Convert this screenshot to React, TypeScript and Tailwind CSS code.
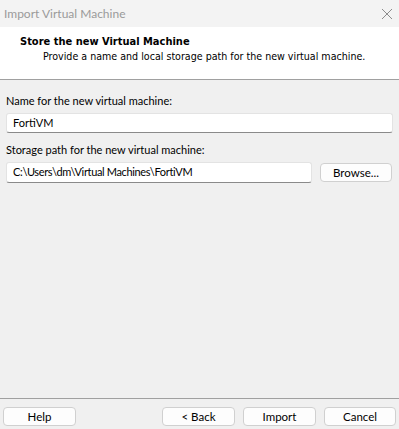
import React from 'react';

const uiFont = { fontFamily: 'Lato, "Liberation Sans", sans-serif' };

function WinButton({ label, className = '' }: { label: string; className?: string }) {
  return (
    <button
      className={`h-[19px] rounded-[4px] border border-[#d0d0d0] bg-[#fdfdfd] text-[11.5px] leading-none text-black ${className}`}
    >
      {label}
    </button>
  );
}

export default function App() {
  return (
    <div
      className="flex h-[429px] w-[399px] flex-col overflow-hidden bg-[#f0f0f0] text-black"
      style={uiFont}
    >
      {/* window title bar */}
      <div className="flex h-[27px] items-center justify-between bg-[#f3f3f3] pl-[4px] pr-[5px]">
        <span className="text-[12px] text-[#9a9a9a]">Import Virtual Machine</span>
        <svg width="12" height="12" viewBox="0 0 12 12" className="mr-[1px]">
          <path d="M1 1L11 11M11 1L1 11" stroke="#8c8c8c" strokeWidth="1" />
        </svg>
      </div>

      {/* wizard header */}
      <div
        className="flex h-[53px] flex-col border-b border-[#a0a0a0] bg-white pt-[8px]"
        style={{ fontFamily: '"DejaVu Sans Condensed", "Liberation Sans", sans-serif' }}
      >
        <div className="pl-[20px] text-[11px] font-bold leading-[14px]">Store the new Virtual Machine</div>
        <div className="pl-[43px] text-[10.6px] leading-[15px]">
          Provide a name and local storage path for the new virtual machine.
        </div>
      </div>

      {/* form */}
      <div className="flex flex-1 flex-col px-[6px] pt-[13px]">
        <label className="text-[11px] leading-[16px]">Name for the new virtual machine:</label>
        <div className="mt-[4px] flex h-[20px] items-center rounded-[3px] border border-[#e3e3e3] border-b-[#8a8a8a] bg-white pl-[6px] text-[11px]">
          FortiVM
        </div>
        <label className="mt-[9px] text-[11px] leading-[16px]">Storage path for the new virtual machine:</label>
        <div className="mt-[4px] flex items-center gap-[8px]">
          <div className="flex h-[21px] w-[306px] items-center rounded-[3px] border border-[#e3e3e3] border-b-[#8a8a8a] bg-white pl-[6px] text-[11px] tracking-[-0.35px]">
            C:\Users\dm\Virtual Machines\FortiVM
          </div>
          <WinButton label="Browse..." className="w-[72px]" />
        </div>
      </div>

      {/* footer */}
      <div className="flex h-[31px] items-start border-t border-[#a0a0a0] px-[3px] pt-[8px]">
        <WinButton label="Help" className="w-[73px]" />
        <div className="flex-1" />
        <div className="flex gap-[8px]">
          <WinButton label="< Back" className="w-[73px]" />
          <WinButton label="Import" className="w-[73px]" />
          <WinButton label="Cancel" className="w-[72px]" />
        </div>
      </div>
    </div>
  );
}
